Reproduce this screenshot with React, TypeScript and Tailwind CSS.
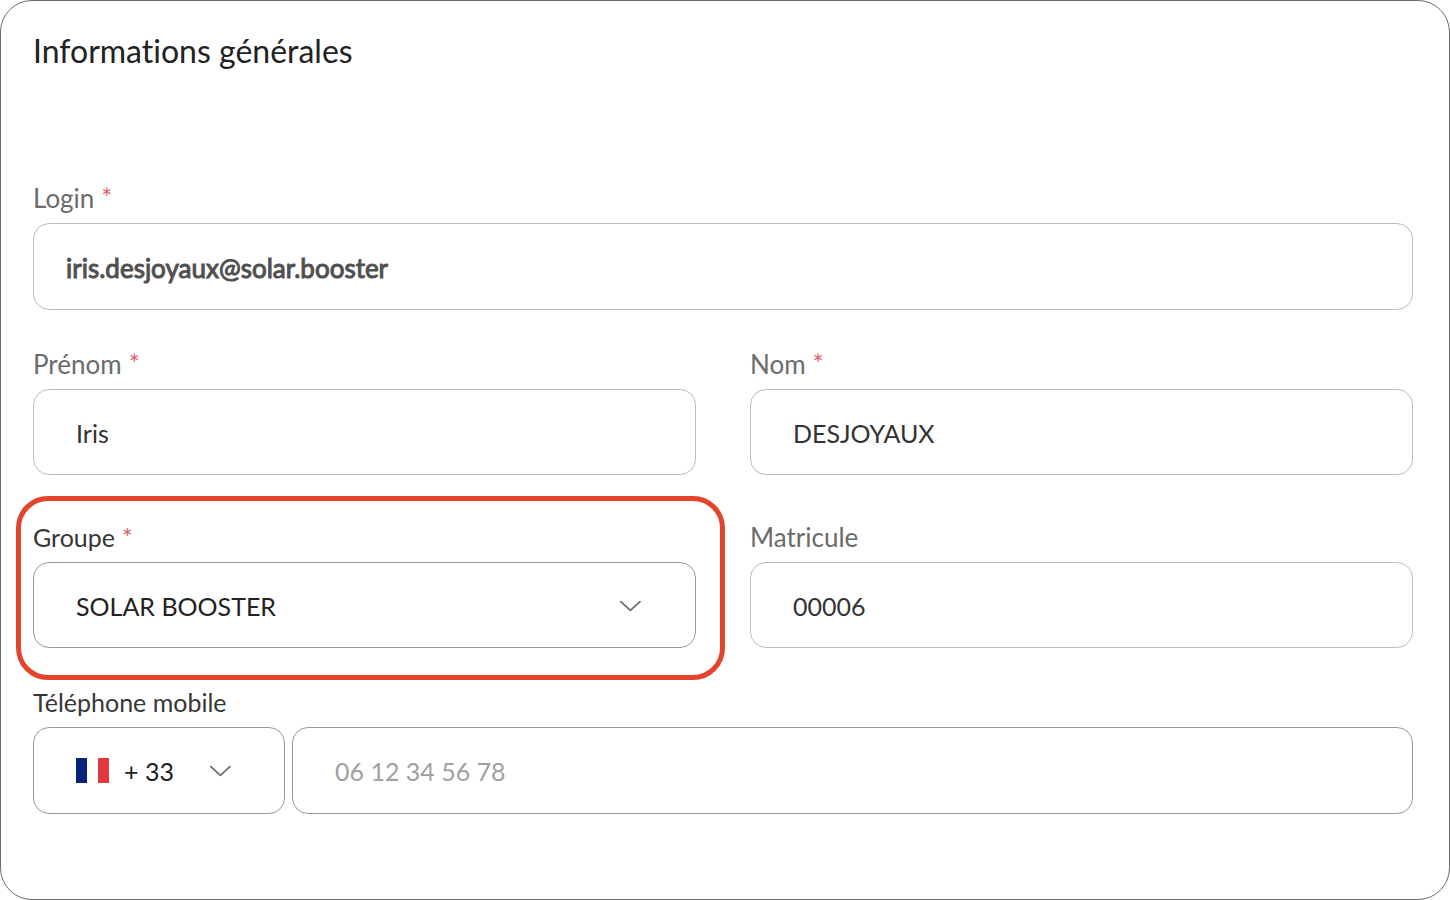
import { useState } from "react";
import type { ReactNode } from "react";
import { clsx } from "clsx";

const inputBase =
  "block w-full h-[86px] rounded-2xl border bg-white px-[42px] pt-[2px] text-[25px] leading-8 outline-none";

const Chevron = ({ className }: { className: string }) => (
  <svg
    viewBox="0 0 22 12"
    className={clsx("pointer-events-none absolute top-[38px] h-3 w-[22px]", className)}
    fill="none"
    stroke="#6b6b6b"
    strokeWidth="1.7"
    strokeLinecap="round"
    strokeLinejoin="round"
    aria-hidden="true"
  >
    <path d="M1.8 1.6 L11.4 10.4 L21 1.6" />
  </svg>
);

const FrenchFlag = () => (
  <svg
    viewBox="0 0 33 25"
    className="pointer-events-none absolute left-[43px] top-[31px] h-[25px] w-[33px]"
    aria-hidden="true"
  >
    <rect width="11" height="25" fill="#06227a" />
    <rect x="11" width="11" height="25" fill="#ffffff" />
    <rect x="22" width="11" height="25" fill="#e1383b" />
  </svg>
);

type FieldProps = {
  id: string;
  label: string;
  required?: boolean;
  active?: boolean;
  highlighted?: boolean;
  children: ReactNode;
};

const Field = ({ id, label, required, active, highlighted, children }: FieldProps) => (
  <div className="relative min-w-0">
    {highlighted && (
      <div className="pointer-events-none absolute -left-[17px] -right-[29px] -top-6 -bottom-8 rounded-[32px] border-[5px] border-[#e2452c]" />
    )}
    <label
      htmlFor={id}
      className={clsx(
        "mb-2 flex h-[34px] items-center gap-[7px] leading-8",
        active ? "text-[25px] text-[#363636]" : "text-[26px] text-[#6b6b6b]"
      )}
    >
      {label}
      {required && <span className="text-[#dc5f68]">*</span>}
    </label>
    {children}
  </div>
);

const App = () => {
  const [form, setForm] = useState({
    login: "iris.desjoyaux@solar.booster",
    firstName: "Iris",
    lastName: "DESJOYAUX",
    group: "SOLAR BOOSTER",
    matricule: "00006",
    country: "+ 33",
    phone: ""
  });

  const update = (key: keyof typeof form) => (e: { target: { value: string } }) =>
    setForm({ ...form, [key]: e.target.value });

  return (
    <form className="min-h-screen rounded-[32px] border border-[#6b6b6b] bg-white pb-12 pl-8 pr-9 pt-[30px] font-['Lato',sans-serif]">
      <h1 className="mb-[110px] text-[32px] leading-10 text-[#222222] [font-variant-ligatures:none]">
        Informations générales
      </h1>

      <Field id="login" label="Login" required>
        <input
          id="login"
          type="email"
          value={form.login}
          onChange={update("login")}
          className="block h-[87px] w-full rounded-2xl border border-[#bdbdbd] bg-white px-8 pt-[2px] text-[26px] leading-8 text-[#505050] outline-none [-webkit-text-stroke:1px_#505050]"
        />
      </Field>

      <div className="mt-[37px] grid grid-cols-2 gap-x-[54px] gap-y-[45px]">
        <Field id="firstName" label="Prénom" required>
          <input
            id="firstName"
            type="text"
            value={form.firstName}
            onChange={update("firstName")}
            className={clsx(inputBase, "border-[#bdbdbd] text-[#333333]")}
          />
        </Field>
        <Field id="lastName" label="Nom" required>
          <input
            id="lastName"
            type="text"
            value={form.lastName}
            onChange={update("lastName")}
            className={clsx(inputBase, "border-[#bdbdbd] text-[#333333]")}
          />
        </Field>
        <Field id="group" label="Groupe" required active highlighted>
          <div className="relative">
            <select
              id="group"
              value={form.group}
              onChange={update("group")}
              className={clsx(inputBase, "appearance-none border-[#999999] text-[#222222]")}
            >
              <option>SOLAR BOOSTER</option>
            </select>
            <Chevron className="right-[55px]" />
          </div>
        </Field>
        <Field id="matricule" label="Matricule">
          <input
            id="matricule"
            type="text"
            value={form.matricule}
            onChange={update("matricule")}
            className={clsx(inputBase, "border-[#bdbdbd] text-[#333333]")}
          />
        </Field>
      </div>

      <div className="mt-[37px]">
        <Field id="phone" label="Téléphone mobile" active>
          <div className="flex gap-[7px]">
            <div className="relative w-[252px] shrink-0">
              <select
                aria-label="Indicatif"
                value={form.country}
                onChange={update("country")}
                className="block h-[87px] w-full appearance-none rounded-2xl border border-[#999999] bg-white pl-[90px] text-[25px] leading-8 text-[#222222] outline-none"
              >
                <option>+ 33</option>
              </select>
              <FrenchFlag />
              <Chevron className="right-[54px]" />
            </div>
            <input
              id="phone"
              type="tel"
              placeholder="06 12 34 56 78"
              value={form.phone}
              onChange={update("phone")}
              className="block h-[87px] min-w-0 flex-1 rounded-2xl border border-[#999999] bg-white px-[42px] text-[25px] leading-8 text-[#222222] outline-none placeholder:text-[#a0a0a0]"
            />
          </div>
        </Field>
      </div>
    </form>
  );
};

export default App;
